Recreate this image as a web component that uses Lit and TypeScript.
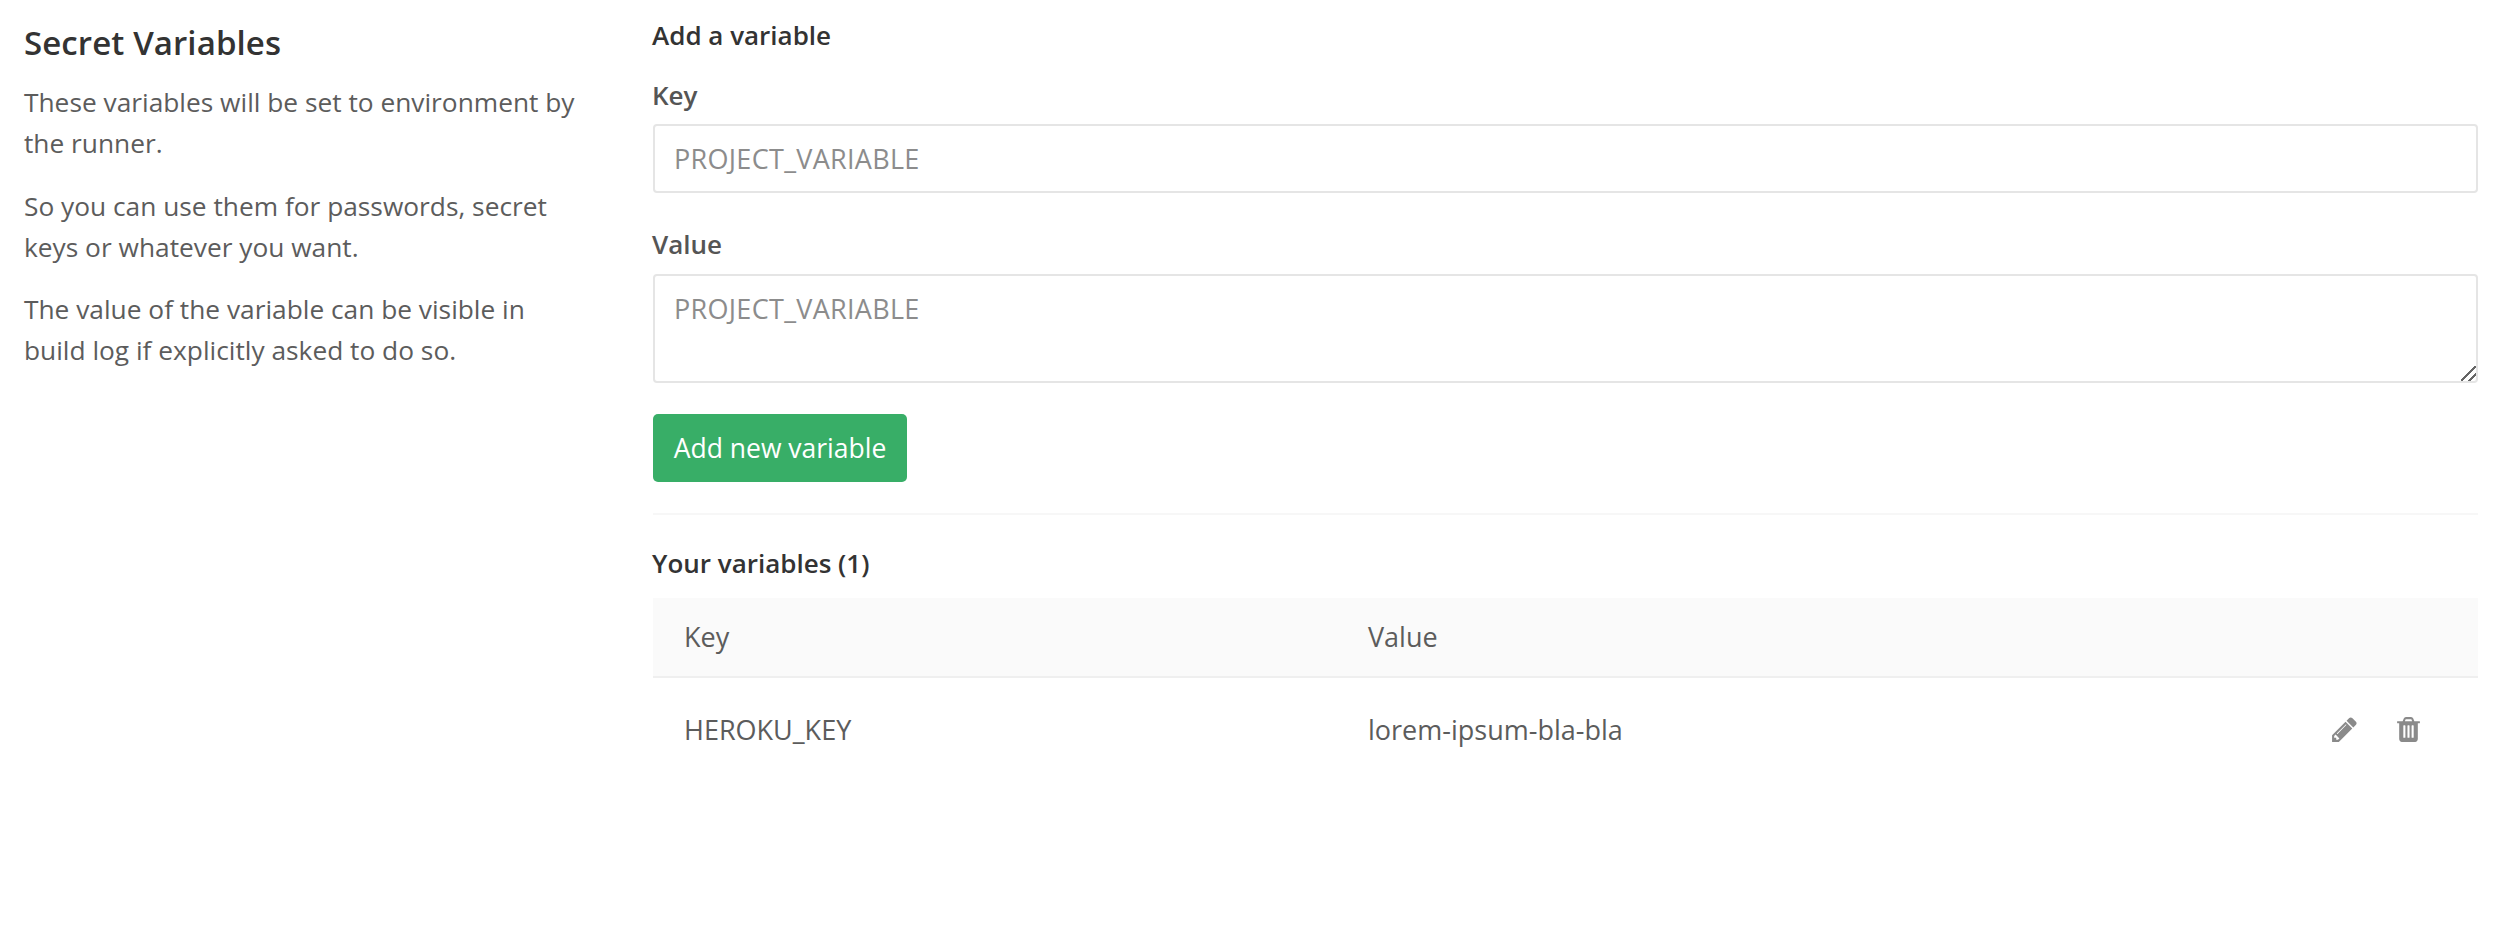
import { LitElement, html, css } from "lit";
import { customElement } from "lit/decorators.js";

const PENCIL = "M491 1536l91-91-235-235-91 91v107h128v128h107zm523-928q0-22-22-22-10 0-17 7l-542 542q-7 7-7 17 0 22 22 22 10 0 17-7l542-542q7-7 7-17zm-54-192l416 416-832 832h-416v-416zm683 96q0 53-37 90l-166 166-416-416 166-165q36-38 90-38 53 0 91 38l235 234q37 39 37 91z";
const TRASH = "M704 1376v-704q0-14-9-23t-23-9h-64q-14 0-23 9t-9 23v704q0 14 9 23t23 9h64q14 0 23-9t9-23zm256 0v-704q0-14-9-23t-23-9h-64q-14 0-23 9t-9 23v704q0 14 9 23t23 9h64q14 0 23-9t9-23zm256 0v-704q0-14-9-23t-23-9h-64q-14 0-23 9t-9 23v704q0 14 9 23t23 9h64q14 0 23-9t9-23zm-544-992h448l-48-117q-7-9-17-11h-317q-10 2-17 11zm928 32v64q0 14-9 23t-23 9h-96v948q0 83-47 143.500t-113 60.500h-832q-66 0-113-58.500t-47-141.500v-952h-96q-14 0-23-9t-9-23v-64q0-14 9-23t23-9h309l70-167q15-37 54-63t79-26h320q40 0 79 26t54 63l70 167h309q14 0 23 9t9 23z";

@customElement("app-root")
export class AppRoot extends LitElement {
  static styles = css`
    :host { display: block; width: 2500px; height: 942px; background: #fff; overflow: hidden;
      font-family: "Open Sans", "Liberation Sans", sans-serif; font-size: 26.3px; color: #5c5c5c; }
    * { box-sizing: border-box; }
    .page { display: flex; padding: 0 22px 0 24px; }
    .side { width: 629px; flex: none; padding-right: 70px; padding-top: 21px; }
    .side h4 { margin: 0 0 17px; font-size: 33px; line-height: 44px; font-weight: 600; color: #333; letter-spacing: 0.1px; }
    .side p { margin: 0 0 21px; line-height: 41.3px; }
    .main { flex: 1; min-width: 0; padding-top: 18px; }
    h5 { margin: 0 0 0 -1px; font-size: 26px; line-height: 34px; font-weight: 600; color: #333; }
    label { display: block; font-weight: 600; font-size: 26px; line-height: 34px; color: #555; margin-left: -1px; }
    .l1 { margin-top: 26px; }
    .l2 { margin-top: 34px; padding-bottom: 1px; }
    input, textarea { display: block; width: 100%; margin: 12px 0 0; border: 2px solid #e5e5e5; border-radius: 4px;
      font: inherit; font-size: 27px; letter-spacing: 0.3px; color: #555; padding: 0 19px; outline: none; background: #fff; }
    input { height: 69px; }
    textarea { height: 109px; padding-top: 16px; line-height: 34px; resize: vertical; }
    textarea::-webkit-resizer {
      background: linear-gradient(135deg, transparent 0 46%, #666 46% 56%, transparent 56% 72%, #666 72% 82%, transparent 82%);
    }
    ::placeholder { color: #8c8c8c; opacity: 1; }
    button { display: block; margin-top: 31px; width: 254px; height: 68px; border: none; border-radius: 5px;
      background: #38ae67; color: #fff; font: inherit; font-size: 26.5px; font-weight: 500; padding: 0; }
    hr { border: 0; height: 2px; background: #f7f7f7; margin: 31px 0 0; }
    .count { margin-top: 31px; }
    .table { margin-top: 18px; font-size: 27px; }
    .row { display: grid; grid-template-columns: 684px 1fr 148px; align-items: center; padding-left: 31px; }
    .head { height: 80px; background: #fafafa; border-bottom: 2px solid #efefef; padding-bottom: 2px; }
    .body { height: 102px; }
    .actions { display: flex; gap: 35px; align-items: center; }
    svg { display: block; width: 29px; height: 29px; fill: #8a8a8a; }
  `;

  render() {
    return html`<div class="page">
      <aside class="side">
        <h4>Secret Variables</h4>
        <p>These variables will be set to environment by the runner.</p>
        <p>So you can use them for passwords, secret keys or whatever you want.</p>
        <p>The value of the variable can be visible in build log if explicitly asked to do so.</p>
      </aside>
      <main class="main">
        <h5>Add a variable</h5>
        <label class="l1">Key</label>
        <input placeholder="PROJECT_VARIABLE" />
        <label class="l2">Value</label>
        <textarea placeholder="PROJECT_VARIABLE"></textarea>
        <button>Add new variable</button>
        <hr />
        <h5 class="count">Your variables (1)</h5>
        <div class="table">
          <div class="row head"><span>Key</span><span>Value</span><span></span></div>
          <div class="row body">
            <span>HEROKU_KEY</span><span>lorem-ipsum-bla-bla</span>
            <span class="actions">
              <svg viewBox="0 0 1792 1792"><path d=${PENCIL} /></svg>
              <svg viewBox="0 0 1792 1792"><path d=${TRASH} /></svg>
            </span>
          </div>
        </div>
      </main>
    </div>`;
  }
}
